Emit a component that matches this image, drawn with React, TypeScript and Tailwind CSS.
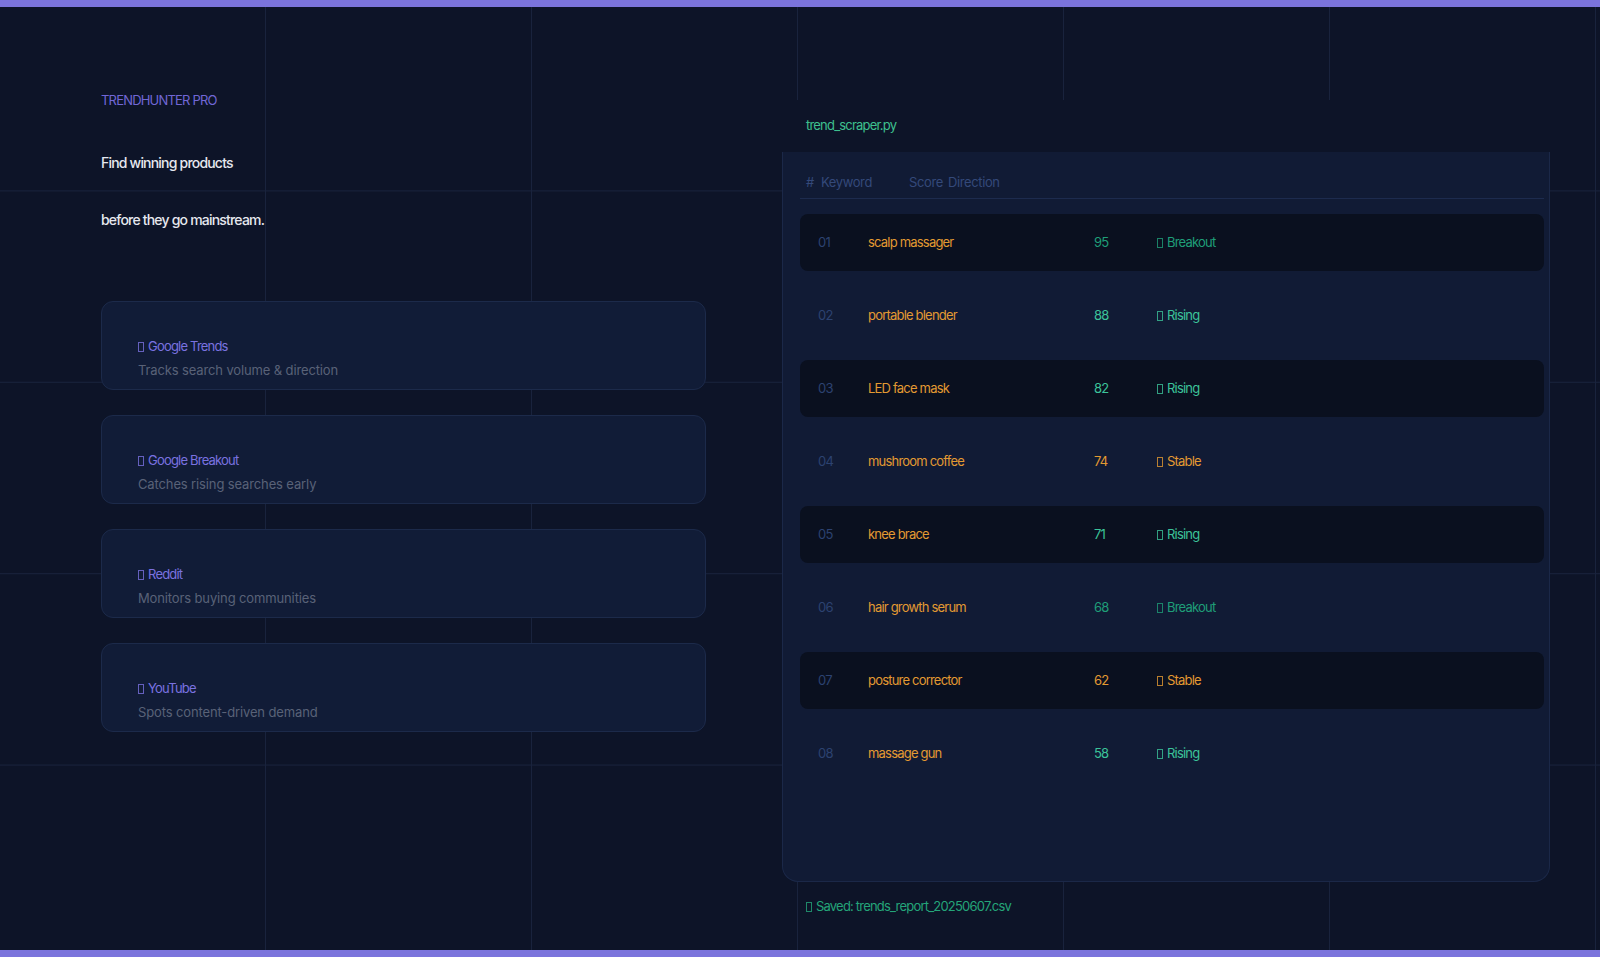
import React from 'react';

interface Source {
  name: string;
  desc: string;
}

interface TrendRow {
  keyword: string;
  score: number;
  direction: 'Breakout' | 'Rising' | 'Stable';
}

const sources: Source[] = [
  { name: 'Google Trends', desc: 'Tracks search volume & direction' },
  { name: 'Google Breakout', desc: 'Catches rising searches early' },
  { name: 'Reddit', desc: 'Monitors buying communities' },
  { name: 'YouTube', desc: 'Spots content-driven demand' },
];

const rows: TrendRow[] = [
  { keyword: 'scalp massager', score: 95, direction: 'Breakout' },
  { keyword: 'portable blender', score: 88, direction: 'Rising' },
  { keyword: 'LED face mask', score: 82, direction: 'Rising' },
  { keyword: 'mushroom coffee', score: 74, direction: 'Stable' },
  { keyword: 'knee brace', score: 71, direction: 'Rising' },
  { keyword: 'hair growth serum', score: 68, direction: 'Breakout' },
  { keyword: 'posture corrector', score: 62, direction: 'Stable' },
  { keyword: 'massage gun', score: 58, direction: 'Rising' },
];

const directionColor = {
  Breakout: 'text-[#1f9e78]',
  Rising: 'text-[#3cc39a]',
  Stable: 'text-[#e39a32]',
};

// missing-glyph box, as the emoji show up in the original
const Tofu: React.FC = () => (
  <span className="mr-[4px] inline-block h-[10px] w-[6px] translate-y-[1px] border border-current opacity-80" />
);

const SourceCard: React.FC<{ source: Source }> = ({ source }) => (
  <div className="h-[89px] rounded-xl border border-[#1c2a4a] bg-[#111c37] px-9 pt-[34px]">
    <div className="text-[13px] leading-5 text-[#7a72e0]">
      <Tofu />
      {source.name}
    </div>
    <div className="mt-1 text-[13px] leading-5 tracking-[-0.01em] text-[#596277]">{source.desc}</div>
  </div>
);

export default function App() {
  return (
    <div
      className="flex h-[957px] flex-col bg-[#0d1428] bg-[linear-gradient(to_right,transparent_265px,#19233d_265px),linear-gradient(to_bottom,transparent_190.4px,#19233d_190.4px)] bg-[size:266px_191.4px] tracking-[-0.05em]"
      style={{ fontFamily: 'Inter, "Noto Sans", sans-serif' }}
    >
      <div className="h-[7px] bg-[#7b74dc]" />

      <div className="flex flex-1 items-start pl-[101px]">
        {/* left: intro + data sources */}
        <div className="w-[605px] pt-[83px]">
          <div className="text-[13px] leading-5 text-[#7167d6]">TRENDHUNTER PRO</div>
          <h1 className="mt-6 text-[14px] font-medium leading-[57px] text-[#e6e8ef]">
            Find winning products
            <br />
            before they go mainstream.
          </h1>
          <div className="mt-[53px] flex flex-col gap-[25px]">
            {sources.map(s => (
              <SourceCard key={s.name} source={s} />
            ))}
          </div>
        </div>

        {/* right: scraper output window */}
        <div className="ml-[76px] w-[768px] pt-[93px]">
          <div className="flex h-[52px] items-center bg-[#0d1428] px-6 text-[13px] text-[#3ec08f]">
            trend_scraper.py
          </div>
          <div className="h-[730px] rounded-b-2xl border-x border-b border-[#1b2848] bg-[#111b35] pl-[17px] pr-[5px] pt-5">
            <div className="flex border-b border-[#1d2b4e] pb-[6px] pl-[6px] text-[13px] leading-5 tracking-[-0.03em] text-[#34497a]">
              <span className="w-[15px]">#</span>
              <span className="w-[88px]">Keyword</span>
              <span className="w-[39px]">Score</span>
              <span>Direction</span>
            </div>
            <div className="mt-[15px] flex flex-col gap-4">
              {rows.map((row, i) => {
                const c = directionColor[row.direction];
                return (
                  <div
                    key={row.keyword}
                    className={`flex h-[57px] items-center rounded-lg pl-[18px] text-[13px] ${
                      i % 2 === 0 ? 'bg-[#0a101f]' : ''
                    }`}
                  >
                    <span className="w-[50px] text-[#2c4270]">{String(i + 1).padStart(2, '0')}</span>
                    <span className="w-[226px] text-[#e39a32]">{row.keyword}</span>
                    <span className={`w-[63px] ${c}`}>{row.score}</span>
                    <span className={c}>
                      <Tofu />
                      {row.direction}
                    </span>
                  </div>
                );
              })}
            </div>
          </div>
          <div className="mt-[14px] px-6 text-[13px] leading-5 text-[#24a579]">
            <Tofu />
            Saved: trends_report_20250607.csv
          </div>
        </div>
      </div>

      <div className="h-[7px] bg-[#7b74dc]" />
    </div>
  );
}
